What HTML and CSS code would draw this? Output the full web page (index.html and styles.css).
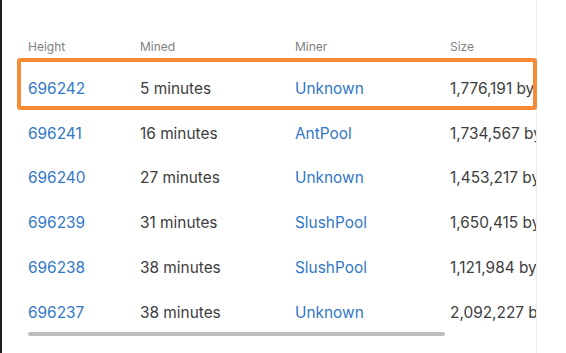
FILE: index.html
```html
<!DOCTYPE html>
<html>
<head>
<meta charset="utf-8">
<link rel="stylesheet" href="styles.css">
</head>
<body>
<div class="page">
  <div class="edge"></div>
  <div class="panel">
    <div class="table-wrap">
      <div class="row head">
        <div class="c h">Height</div>
        <div class="c m">Mined</div>
        <div class="c p">Miner</div>
        <div class="c s">Size</div>
      </div>
      <div class="row">
        <div class="c h link">696242</div>
        <div class="c m">5 minutes</div>
        <div class="c p link">Unknown</div>
        <div class="c s">1,776,191 bytes</div>
      </div>
      <div class="row">
        <div class="c h link">696241</div>
        <div class="c m">16 minutes</div>
        <div class="c p link">AntPool</div>
        <div class="c s">1,734,567 bytes</div>
      </div>
      <div class="row">
        <div class="c h link">696240</div>
        <div class="c m">27 minutes</div>
        <div class="c p link">Unknown</div>
        <div class="c s">1,453,217 bytes</div>
      </div>
      <div class="row">
        <div class="c h link">696239</div>
        <div class="c m">31 minutes</div>
        <div class="c p link">SlushPool</div>
        <div class="c s">1,650,415 bytes</div>
      </div>
      <div class="row">
        <div class="c h link">696238</div>
        <div class="c m">38 minutes</div>
        <div class="c p link">SlushPool</div>
        <div class="c s">1,121,984 bytes</div>
      </div>
      <div class="row">
        <div class="c h link">696237</div>
        <div class="c m">38 minutes</div>
        <div class="c p link">Unknown</div>
        <div class="c s">2,092,227 bytes</div>
      </div>
      <div class="scroll"><div class="thumb"></div></div>
    </div>
    <div class="highlight"></div>
  </div>
</div>
</body>
</html>
```
FILE: styles.css
```css
html, body {
  margin: 0;
  padding: 0;
  background: #fff;
}
body {
  font-family: Inter, "Noto Sans", sans-serif;
  width: 566px;
  height: 353px;
  overflow: hidden;
}
.page {
  display: flex;
  height: 353px;
}
.edge {
  width: 2px;
  background: #1e1e1e;
  flex: none;
}
.panel {
  position: relative;
  width: 534px;
  border-right: 1px solid #ececec;
  flex: none;
}
.table-wrap {
  overflow: hidden;
  padding: 34px 0 0 26px;
}
.row {
  display: flex;
  height: 44.8px;
  align-items: center;
  white-space: nowrap;
  font-size: 15.4px;
  color: #3d3d3d;
}
.row.head {
  height: 24px;
  font-size: 12px;
  color: #828282;
  margin-bottom: 8px;
}
.c { flex: none; }
.h { width: 112px; }
.m { width: 155px; }
.p { width: 155px; }
.s { width: 140px; }
.link { color: #3278c6; }
.scroll {
  margin-top: -3px;
  width: 508px;
  height: 4px;
}
.thumb {
  width: 417px;
  height: 4px;
  background: #bdbdbd;
  border-radius: 2px;
}
.highlight {
  position: absolute;
  left: 15px;
  top: 58px;
  width: 512px;
  height: 44px;
  border: 4px solid #f78a33;
  border-radius: 3px;
}
```
